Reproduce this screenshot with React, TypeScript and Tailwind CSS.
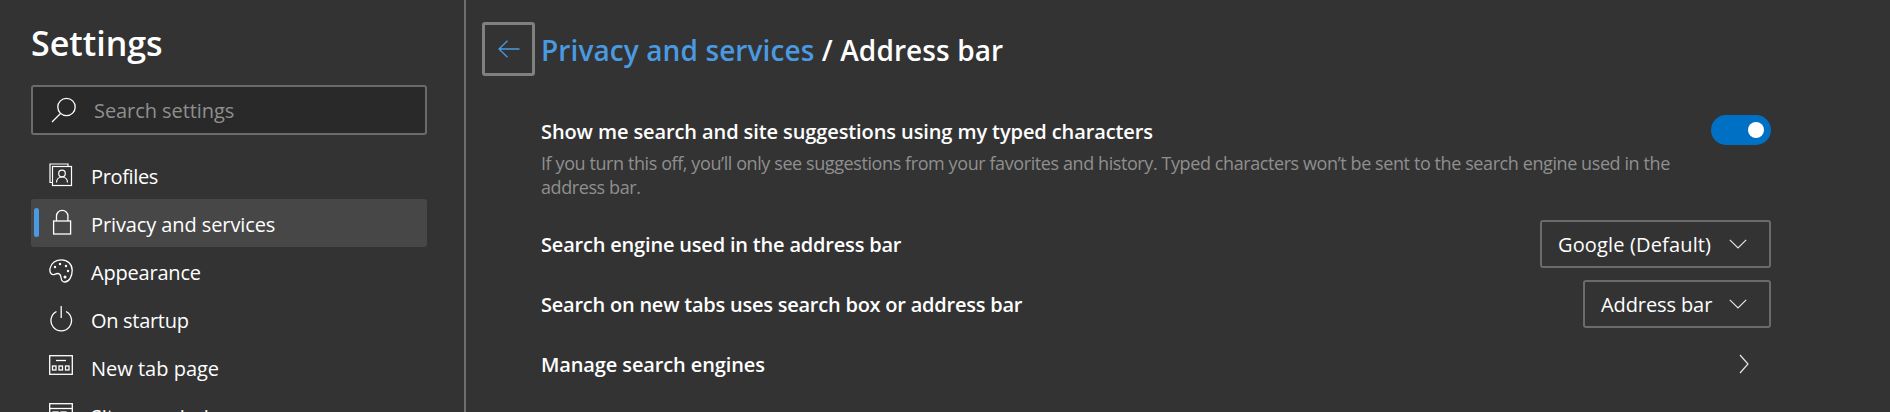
import React from "react";

const font = { fontFamily: '"Open Sans", "Noto Sans", sans-serif' };

function ProfileIcon() {
  return (
    <svg width="24" height="24" viewBox="0 0 24 24" fill="none" stroke="#fff" strokeWidth="1.2">
      <path d="M3.500 19.500H1V1h18v2.500" />
      <rect x="3.500" y="3.500" width="19" height="19" />
      <circle cx="13" cy="10.500" r="3.300" />
      <path d="M7.500 19.500c0-3.500 2.500-5.500 5.500-5.500s5.500 2 5.500 5.500" />
    </svg>
  );
}
function LockIcon() {
  return (
    <svg width="24" height="28" viewBox="0 0 24 28" fill="none" stroke="#fff" strokeWidth="1.300">
      <rect x="4.600" y="12" width="17" height="13" />
      <path d="M7.500 12V7a5.700 5.700 0 0 1 11.400 0v5" />
    </svg>
  );
}
function PaletteIcon() {
  return (
    <svg width="24" height="24" viewBox="0 0 24 24" fill="none" stroke="#fff" strokeWidth="1.300">
      <path d="M1 9.500C2 4 7 .8 12.500.8c6 0 10.700 4.500 10.700 10.500 0 6-3 11.700-7.500 11.700-3 0-3.400-2-3.700-4.500-.3-2.600-1.700-4-3.500-4-2 0-2.500 1.200-4.500 1.200C2 15.700.4 13 1 9.500Z" />
      <circle cx="6" cy="8" r="1.200" fill="#fff" stroke="none" />
      <circle cx="11" cy="5" r="1.200" fill="#fff" stroke="none" />
      <circle cx="17" cy="7" r="1.200" fill="#fff" stroke="none" />
      <circle cx="19" cy="12" r="1.200" fill="#fff" stroke="none" />
      <circle cx="16" cy="18" r="1.500" fill="#fff" stroke="none" />
    </svg>
  );
}
function PowerIcon() {
  return (
    <svg width="24" height="26" viewBox="0 0 24 26" fill="none" stroke="#fff" strokeWidth="1.300">
      <path d="M7.500 5.500a10.300 10.300 0 1 0 9.500 0" />
      <path d="M12.200 0v12" />
    </svg>
  );
}
function NewTabIcon() {
  return (
    <svg className="mb-[4px]" width="24" height="20" viewBox="0 0 24 20" fill="none" stroke="#fff" strokeWidth="1.300">
      <rect x=".7" y=".7" width="22.600" height="18.600" />
      <path d="M7 5.500h10" />
      <rect x="3.500" y="11" width="3.500" height="4" />
      <rect x="10" y="11" width="3.500" height="4" />
      <rect x="16.500" y="11" width="3.500" height="4" />
    </svg>
  );
}
function SitePermIcon() {
  return (
    <svg className="mb-[4px]" width="24" height="20" viewBox="0 0 24 20" fill="none" stroke="#fff" strokeWidth="1.300">
      <rect x=".7" y=".7" width="22.600" height="18.600" />
      <path d="M1 5.500h22" />
      <rect x="4" y="9" width="5" height="5" />
      <rect x="12" y="9" width="5" height="5" />
    </svg>
  );
}
function Chevron() {
  return (
    <svg width="18" height="10" viewBox="0 0 18 10" fill="none" stroke="#e6e6e6" strokeWidth="1.200">
      <path d="M.8.800 9 9 17.200.800" />
    </svg>
  );
}

const nav = [
  { label: "Profiles", icon: <ProfileIcon />, track: "tracking-[-0.35px]" },
  { label: "Privacy and services", icon: <LockIcon />, active: true, track: "tracking-[-0.1px]" },
  { label: "Appearance", icon: <PaletteIcon />, track: "tracking-[-0.2px]" },
  { label: "On startup", icon: <PowerIcon />, track: "tracking-[-0.3px]" },
  { label: "New tab page", icon: <NewTabIcon />, track: "tracking-[0px]" },
  { label: "Site permissions", icon: <SitePermIcon />, track: "tracking-[-0.1px]" },
];

function Select({ label, width, track }: { label: string; width: string; track: string }) {
  return (
    <div className={`flex h-[48px] items-center justify-between rounded-[3px] border-2 border-[#6b6b6b] pl-[16px] pr-[22px] text-[20px] text-white ${width}`}>
      <span className={`pt-[2px] ${track}`}>{label}</span>
      <Chevron />
    </div>
  );
}

export default function App() {
  return (
    <div className="flex h-[412px] w-[1890px] overflow-hidden bg-[#333333] text-white" style={font}>
      <aside className="h-full w-[466px] shrink-0 border-r-2 border-r-[#6e6e6e] pl-[31px] pr-[37px]">
        <h1 className="mt-[21px] h-[45px] text-[34px] font-semibold leading-[45px]">Settings</h1>
        <div className="mt-[19px] flex h-[50px] w-[396px] items-center rounded-[3px] border-2 border-[#6b6b6b] bg-[#292929] pl-[18px]">
          <svg width="26" height="26" viewBox="0 0 26 26" fill="none" stroke="#fff" strokeWidth="1.300">
            <circle cx="15.500" cy="10" r="8.700" />
            <path d="M9.500 16.500 1 25" />
          </svg>
          <span className="ml-[17px] pt-[2px] text-[20px] tracking-[-0.07px] text-[#8f8f8f]">Search settings</span>
        </div>
        <nav className="mt-[16px]">
          {nav.map((n) => (
            <div
              key={n.label}
              className={`relative flex h-[48px] items-center rounded-[3px] pl-[18px] text-[20px] ${n.active ? "bg-[#474747]" : ""}`}
            >
              {n.active && <span className="absolute left-[3px] top-[9px] h-[29px] w-[5px] rounded-[3px] bg-[#4a9ae1]" />}
              <span className="flex w-[42px] shrink-0 items-center">{n.icon}</span>
              <span className={`pt-[4px] ${n.track}`}>{n.label}</span>
            </div>
          ))}
        </nav>
      </aside>
      <main className="flex-1 pl-[16px]">
        <div className="mt-[22px] flex items-center">
          <div className="flex h-[54px] w-[53px] items-center justify-center rounded-[3px] border-[3px] border-[#808080]">
            <svg width="22" height="18" viewBox="0 0 22 18" fill="none" stroke="#4a9ae1" strokeWidth="1.300">
              <path d="M21.500 9H1M9.500.8 1 9l8.500 8.200" />
            </svg>
          </div>
          <h2 className="ml-[6px] pt-[2px] text-[28px] font-semibold tracking-[0.1px]">
            <span className="text-[#4a9ae1]">Privacy and services</span> / Address bar
          </h2>
        </div>
        <div className="ml-[59px] w-[1230px]">
          <div className="mt-[39px] flex items-start justify-between">
            <div className="pt-[3px]">
              <div className="text-[20px] font-semibold leading-[28px] tracking-[-0.1px]">Show me search and site suggestions using my typed characters</div>
              <p className="mt-[5px] w-[1140px] text-[18px] leading-[24px] tracking-[-0.41px] text-[#8f8f8f]">
                If you turn this off, you’ll only see suggestions from your favorites and history. Typed characters won’t be sent to the search engine used in the address bar.
              </p>
            </div>
            <div className="flex h-[30px] w-[60px] items-center justify-end rounded-full bg-[#0070c4] pr-[7px]">
              <span className="h-[16px] w-[16px] rounded-full bg-white" />
            </div>
          </div>
          <div className="mt-[21px] flex h-[48px] items-center justify-between">
            <span className="pt-[2px] text-[20px] font-semibold tracking-[-0.19px]">Search engine used in the address bar</span>
            <Select label="Google (Default)" width="w-[231px]" track="tracking-[0.15px]" />
          </div>
          <div className="mt-[12px] flex h-[48px] items-center justify-between">
            <span className="pt-[2px] text-[20px] font-semibold tracking-[-0.23px]">Search on new tabs uses search box or address bar</span>
            <Select label="Address bar" width="w-[188px]" track="tracking-[-0.1px]" />
          </div>
          <div className="mt-[12px] flex h-[48px] items-center justify-between">
            <span className="pt-[2px] text-[20px] font-semibold tracking-[-0.12px]">Manage search engines</span>
            <svg className="mr-[22px]" width="10" height="20" viewBox="0 0 10 20" fill="none" stroke="#e6e6e6" strokeWidth="1.200">
              <path d="M1 1l8 9-8 9" />
            </svg>
          </div>
        </div>
      </main>
    </div>
  );
}
